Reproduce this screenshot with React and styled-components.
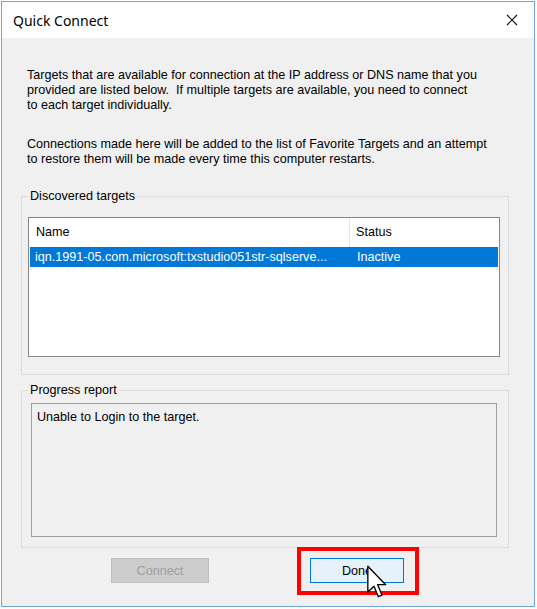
import React from 'react';
import styled, { createGlobalStyle } from 'styled-components';

const GlobalStyle = createGlobalStyle`
  html, body {
    margin: 0;
    padding: 0;
    background: #ffffff;
  }
  * {
    box-sizing: border-box;
  }
`;

const Window = styled.div`
  position: relative;
  margin: 1px 0 0 1px;
  width: 534px;
  height: 606px;
  border: 1px solid #6ea7d6;
  background: #f0f0f0;
  display: flex;
  flex-direction: column;
  font-family: "Liberation Sans", Arial, sans-serif;
  font-size: 12.6px;
  color: #000;
`;

const TitleBar = styled.div`
  height: 36px;
  background: #ffffff;
  display: flex;
  align-items: center;
  justify-content: space-between;
  padding: 0 16px 0 11px;
`;

const Title = styled.span`
  font-family: "Noto Sans", "Open Sans", sans-serif;
  font-size: 14px;
`;

const Body = styled.div`
  padding: 30px 0 0 19px;
  display: flex;
  flex-direction: column;
`;

const Intro = styled.p`
  margin: 0 0 ${p => p.$gap || 0}px 6px;
  line-height: 15px;
  white-space: nowrap;
`;

const Group = styled.fieldset`
  margin: ${p => p.$top}px 0 0 0;
  width: 488px;
  border: 1px solid #dcdcdc;
  border-radius: 0;
  padding: ${p => p.$pad};
  min-width: 0;
`;

const Legend = styled.legend`
  margin-left: ${p => p.$ml}px;
  padding: 0 2px;
  line-height: 15px;
`;

const ListBox = styled.div`
  width: 472px;
  height: 140px;
  background: #ffffff;
  border: 1px solid #828790;
  display: flex;
  flex-direction: column;
`;

const Row = styled.div`
  display: grid;
  grid-template-columns: 320px 1fr;
  height: ${p => p.$h}px;
  line-height: ${p => p.$h}px;
  background: ${p => (p.$selected ? '#0078d7' : 'transparent')};
  color: ${p => (p.$selected ? '#ffffff' : '#000000')};
  margin: 0 1px;
`;

const Cell = styled.div`
  padding-left: ${p => p.$pl}px;
  padding-right: 4px;
  white-space: nowrap;
  overflow: hidden;
  text-overflow: ellipsis;
  border-right: ${p => (p.$divider ? '1px solid #e5e5e5' : 'none')};
`;

const ReportBox = styled.div`
  width: 466px;
  height: 134px;
  border: 1px solid #a0a0a0;
  background: #f0f0f0;
  padding: 6px 5px;
  line-height: 15px;
`;

const ButtonRow = styled.div`
  position: relative;
  display: flex;
  margin-top: 10px;
  padding-left: 90px;
  gap: 101px;
`;

const Button = styled.button`
  width: ${p => p.$w}px;
  height: 25px;
  font-family: "Liberation Sans", Arial, sans-serif;
  font-size: 12.6px;
  border: 1px solid ${p => (p.$focus ? '#0078d7' : '#bfbfbf')};
  background: ${p => (p.$focus ? '#e5f1fb' : '#cccccc')};
  color: ${p => (p.disabled ? '#a0a0a0' : '#000000')};
  padding: 0;
`;

const Highlight = styled.div`
  position: absolute;
  left: 276px;
  top: -11px;
  width: 122px;
  height: 48px;
  border: 4px solid #ff0000;
  pointer-events: none;
`;

const Cursor = styled.svg`
  position: absolute;
  left: 346px;
  top: 7px;
`;

function CloseIcon() {
  return (
    <svg width="12" height="12" viewBox="0 0 12 12">
      <path d="M1 1 L11 11 M11 1 L1 11" stroke="#1a1a1a" strokeWidth="1.2" />
    </svg>
  );
}

export default function App() {
  return (
    <>
      <GlobalStyle />
      <Window>
        <TitleBar>
          <Title>Quick Connect</Title>
          <CloseIcon />
        </TitleBar>
        <Body>
          <Intro $gap={24}>
            Targets that are available for connection at the IP address or DNS name that you
            <br />
            provided are listed below.&nbsp; If multiple targets are available, you need to connect
            <br />
            to each target individually.
          </Intro>
          <Intro>
            Connections made here will be added to the list of Favorite Targets and an attempt
            <br />
            to restore them will be made every time this computer restarts.
          </Intro>
          <Group $top={22} $pad="13px 8px 17px 6px">
            <Legend $ml={0}>Discovered targets</Legend>
            <ListBox>
              <Row $h={29}>
                <Cell $pl={6} $divider>Name</Cell>
                <Cell $pl={6}>Status</Cell>
              </Row>
              <Row $h={20} $selected>
                <Cell $pl={5}>iqn.1991-05.com.microsoft:txstudio051str-sqlserve...</Cell>
                <Cell $pl={7}>Inactive</Cell>
              </Row>
            </ListBox>
          </Group>
          <Group $top={8} $pad="5px 8px 10px 9px">
            <Legend $ml={-3}>Progress report</Legend>
            <ReportBox>Unable to Login to the target.</ReportBox>
          </Group>
          <ButtonRow>
            <Button $w={98} disabled>Connect</Button>
            <Button $w={94} $focus>Done</Button>
            <Highlight />
            <Cursor width="20" height="34" viewBox="0 0 12 20">
              <path
                d="M0.5 0.5 L0.5 16 L4.2 12.5 L6.8 18.8 L9 17.9 L6.4 11.6 L11.2 11.6 Z"
                fill="#ffffff"
                stroke="#000000"
                strokeWidth="0.8"
                strokeLinejoin="round"
              />
            </Cursor>
          </ButtonRow>
        </Body>
      </Window>
    </>
  );
}
